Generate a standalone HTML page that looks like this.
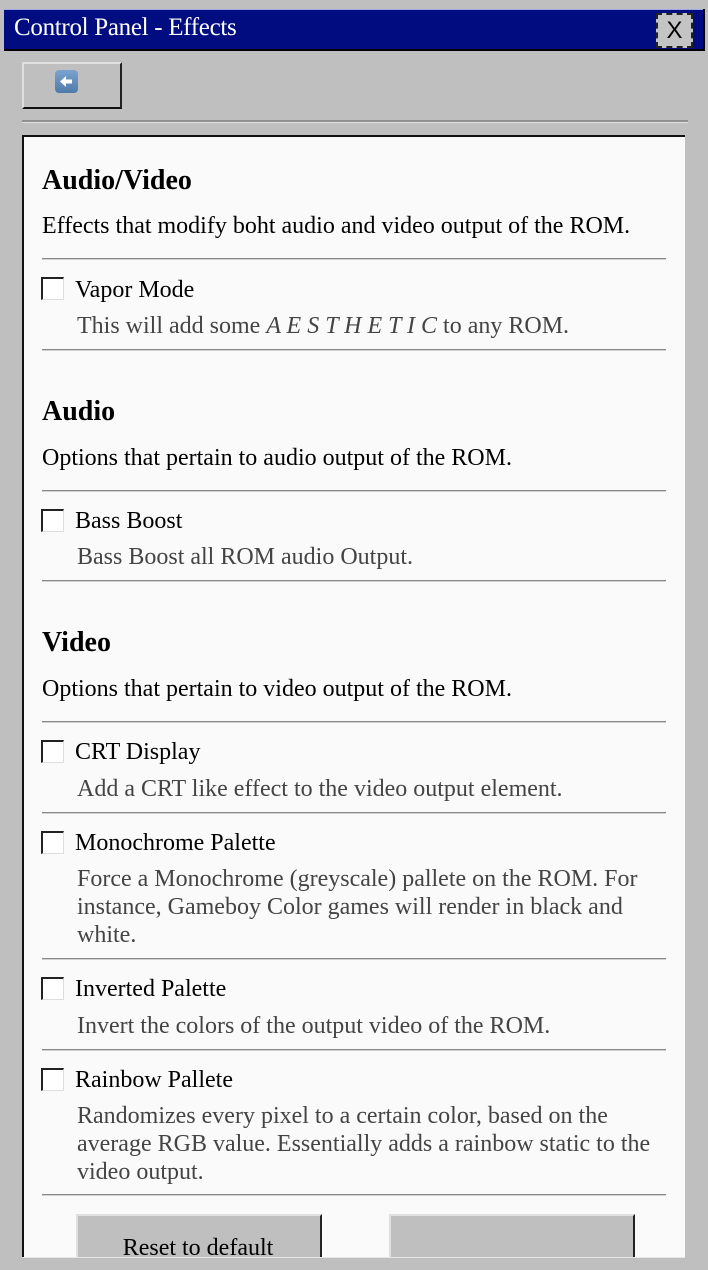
<!DOCTYPE html>
<html style="overflow:hidden;height:1270px"><head><meta charset="utf-8"><style>
*{margin:0;padding:0;box-sizing:border-box}
body{width:708px;height:1270px;background:#bfbfbf;position:relative;overflow:hidden;font-family:"Liberation Serif",serif;color:#000}
.abs{position:absolute}
.t{white-space:nowrap}
.h{font-size:28px;font-weight:bold;line-height:32px;left:42px}
.d{font-size:24px;line-height:28px;left:42px}
.l{font-size:24px;line-height:28px;left:75px}
.s{font-size:24px;line-height:28px;left:77px;width:592px;color:#444}
.hr{left:42px;width:624px;height:2px;background:#8a8a8a;border-bottom:1px solid #d0d0d0}
.cb{left:41px;width:23px;height:23px;background:#fff;border-top:2px solid #222;border-left:2px solid #222;border-right:1px solid #ddd;border-bottom:1px solid #ddd}
</style></head><body>
<div class="abs" style="left:4px;top:9px;width:701px;height:42px;background:#000;"></div>
<div class="abs" style="left:4px;top:9px;width:699px;height:40px;background:#000c80;border-top:1px solid #a0a8e0;"></div>
<div class="abs t" style="left:14px;top:13px;color:#fff;font-size:25px;line-height:30px;letter-spacing:-0.3px">Control Panel - Effects</div>
<div class="abs" style="left:656px;top:13px;width:37px;height:35px;background:#c4c4c4;border:2px dashed #222;font-family:'Liberation Sans',sans-serif;font-size:24px;line-height:31px;text-align:center">X</div>

<div class="abs" style="left:22px;top:62px;width:100px;height:47px;background:#bfbfbf;border-top:2px solid #e0e0e0;border-left:2px solid #e0e0e0;border-right:2px solid #222;border-bottom:2px solid #111"></div>
<div class="abs" style="left:55px;top:70px;width:23px;height:23px;border-radius:4px;background:linear-gradient(#7ba3cf,#4f7aa8)"></div>
<svg class="abs" style="left:55px;top:70px" width="23" height="23"><path d="M5 11.5 L11 6 V9.5 H17 V13.5 H11 V17 Z" fill="#fff"/></svg>

<div class="abs" style="left:22px;top:120px;width:666px;height:2px;background:#8f8f8f"></div>
<div class="abs" style="left:22px;top:122px;width:666px;height:1px;background:#e0e0e0"></div>

<div class="abs" style="left:22px;top:135px;width:663px;height:1122px;background:#fafafa;border-top:2px solid #111;border-left:2px solid #111;overflow:hidden">
<div style="position:absolute;left:52px;top:1077px;width:246px;height:60px;background:#bfbfbf;border-top:2px solid #e0e0e0;border-left:2px solid #e0e0e0;border-right:2px solid #222"></div>
<div class="t" style="position:absolute;left:52px;top:1097px;width:244px;text-align:center;font-size:24px;line-height:28px">Reset to default</div>
<div style="position:absolute;left:365px;top:1077px;width:246px;height:60px;background:#bfbfbf;border-top:2px solid #e0e0e0;border-left:2px solid #e0e0e0;border-right:2px solid #222"></div>
<div class="t" style="position:absolute;left:365px;top:1117px;width:244px;text-align:center;font-size:24px;line-height:28px">Apply</div>
</div>

<div class="abs t h" style="top:165px">Audio/Video</div>
<div class="abs t d" style="top:212px">Effects that modify boht audio and video output of the ROM.</div>
<div class="abs hr" style="top:258px"></div>
<div class="abs cb" style="top:277px"></div>
<div class="abs t l" style="top:276px">Vapor Mode</div>
<div class="abs s" style="top:312px">This will add some <i>A E S T H E T I C</i> to any ROM.</div>
<div class="abs hr" style="top:349px"></div>

<div class="abs t h" style="top:396px">Audio</div>
<div class="abs t d" style="top:444px">Options that pertain to audio output of the ROM.</div>
<div class="abs hr" style="top:490px"></div>
<div class="abs cb" style="top:509px"></div>
<div class="abs t l" style="top:507px">Bass Boost</div>
<div class="abs s" style="top:543px">Bass Boost all ROM audio Output.</div>
<div class="abs hr" style="top:580px"></div>

<div class="abs t h" style="top:627px">Video</div>
<div class="abs t d" style="top:675px">Options that pertain to video output of the ROM.</div>
<div class="abs hr" style="top:721px"></div>
<div class="abs cb" style="top:740px"></div>
<div class="abs t l" style="top:738px">CRT Display</div>
<div class="abs s" style="top:775px">Add a CRT like effect to the video output element.</div>
<div class="abs hr" style="top:812px"></div>
<div class="abs cb" style="top:831px"></div>
<div class="abs t l" style="top:829px">Monochrome Palette</div>
<div class="abs s" style="top:865px">Force a Monochrome (greyscale) pallete on the ROM. For<br>instance, Gameboy Color games will render in black and<br>white.</div>
<div class="abs hr" style="top:958px"></div>
<div class="abs cb" style="top:977px"></div>
<div class="abs t l" style="top:975px">Inverted Palette</div>
<div class="abs s" style="top:1012px">Invert the colors of the output video of the ROM.</div>
<div class="abs hr" style="top:1049px"></div>
<div class="abs cb" style="top:1068px"></div>
<div class="abs t l" style="top:1066px">Rainbow Pallete</div>
<div class="abs s" style="top:1102px">Randomizes every pixel to a certain color, based on the<br>average RGB value. Essentially adds a rainbow static to the<br>video output.</div>
<div class="abs hr" style="top:1194px"></div>

<div class="abs" style="left:22px;top:1257px;width:663px;height:1px;background:#e6e6e6"></div>
</body></html>
